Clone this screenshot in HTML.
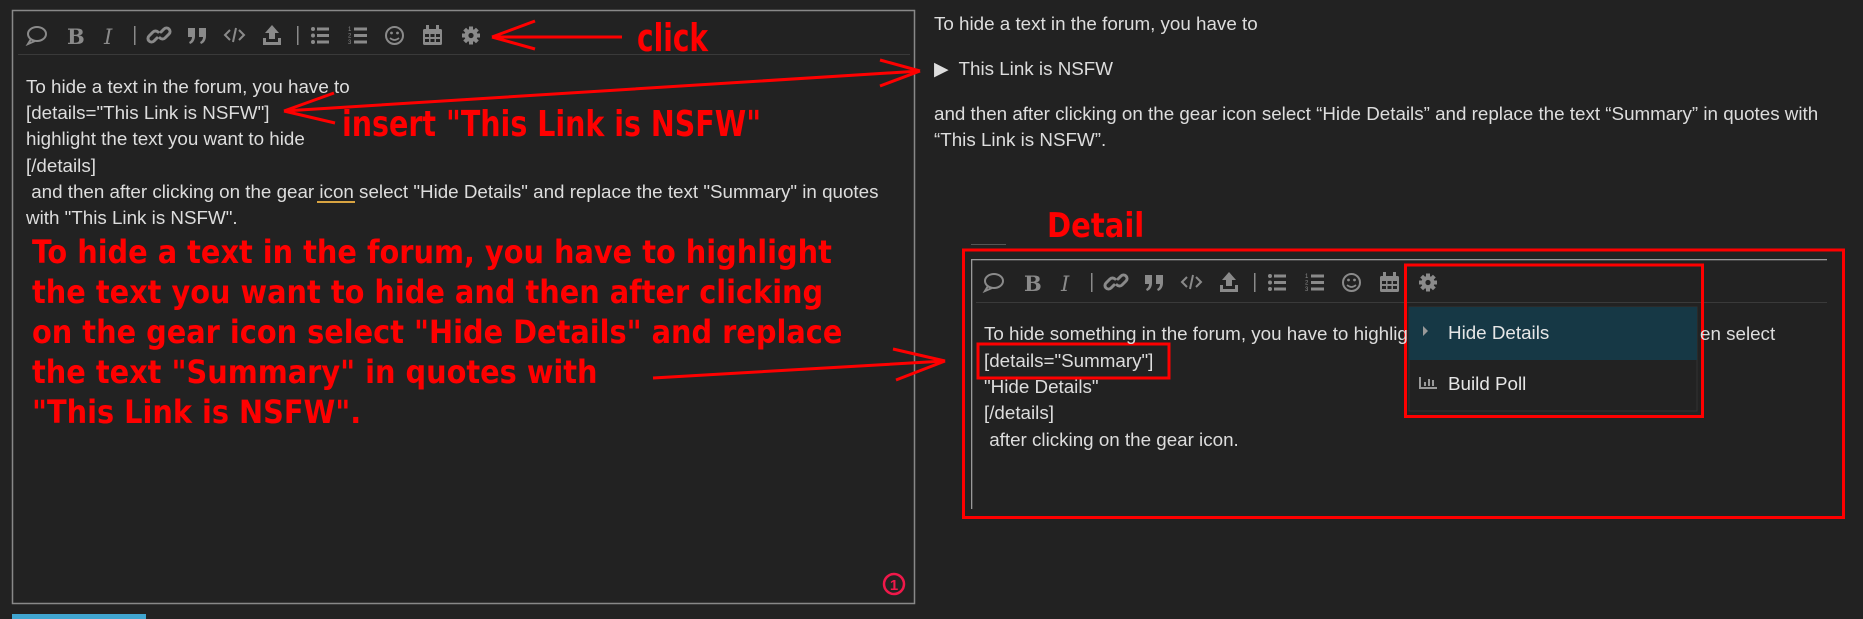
<!DOCTYPE html>
<html><head><meta charset="utf-8">
<style>
html,body{margin:0;padding:0;background:#222;width:1863px;height:619px;overflow:hidden;position:relative}
.t{position:absolute;font-family:"Liberation Sans",Arial,sans-serif;font-size:18.8px;color:#ddd;white-space:nowrap;line-height:26.4px}
.r{position:absolute;font-family:"DejaVu Sans Condensed","DejaVu Sans",sans-serif;font-weight:bold;color:#f00;white-space:nowrap;transform-origin:0 0}
svg{position:absolute;left:0;top:0}
</style></head><body>
<svg width="1863" height="619" viewBox="0 0 1863 619">
<defs>
<g id="tb" fill="#8a8a8a" stroke="none">
 <ellipse cx="37" cy="34" rx="9" ry="7" fill="none" stroke="#8a8a8a" stroke-width="2"/>
 <path d="M31 39 L28 44 L35 41" fill="none" stroke="#8a8a8a" stroke-width="2"/>
 <text x="67" y="44" font-family="DejaVu Serif,serif" font-weight="bold" font-size="21" fill="#8a8a8a">B</text>
 <text x="104" y="44" font-family="DejaVu Serif,serif" font-style="italic" font-size="21" fill="#8a8a8a">I</text>
 <rect x="134" y="26" width="1.5" height="19"/>
 <g fill="none" stroke="#8a8a8a" stroke-width="3" stroke-linecap="round">
  <path d="M157 38 l-3 3 a3.5 3.5 0 0 1 -5 -5 l4 -4 a3.5 3.5 0 0 1 5 0"/>
  <path d="M161 32 l3 -3 a3.5 3.5 0 0 1 5 5 l-4 4 a3.5 3.5 0 0 1 -5 0"/>
 </g>
 <path d="M188 28h7v8c0 4-2 7-5 8l-1-2c2-1 3-3 3-5h-4z M199 28h7v8c0 4-2 7-5 8l-1-2c2-1 3-3 3-5h-4z"/>
 <path d="M230 30l-5 5 5 5 M239 30l5 5-5 5 M236 28l-3 14" fill="none" stroke="#8a8a8a" stroke-width="2"/>
 <path d="M272 25l-7 8h4v6h6v-6h4z"/>
 <path d="M263 38h3v4h12v-4h3v7h-18z"/>
 <rect x="297" y="26" width="1.5" height="19"/>
 <circle cx="313" cy="29" r="2"/><circle cx="313" cy="35.5" r="2"/><circle cx="313" cy="42" r="2"/>
 <rect x="317" y="27.5" width="12" height="3"/><rect x="317" y="34" width="12" height="3"/><rect x="317" y="40.5" width="12" height="3"/>
 <text x="348" y="31" font-size="6" font-family="Liberation Sans">1</text><text x="348" y="37.5" font-size="6" font-family="Liberation Sans">2</text><text x="348" y="44" font-size="6" font-family="Liberation Sans">3</text>
 <rect x="354" y="27.5" width="13" height="3"/><rect x="354" y="34" width="13" height="3"/><rect x="354" y="40.5" width="13" height="3"/>
 <circle cx="394.5" cy="35.5" r="8.5" fill="none" stroke="#8a8a8a" stroke-width="2"/>
 <circle cx="391.5" cy="33" r="1.4"/><circle cx="397.5" cy="33" r="1.4"/>
 <path d="M390 38 q4.5 4 9 0" fill="none" stroke="#8a8a8a" stroke-width="1.6"/>
 <rect x="423" y="29" width="19" height="16" rx="1.5"/>
 <rect x="426" y="25" width="3" height="5"/><rect x="436" y="25" width="3" height="5"/>
 <g fill="#222"><rect x="425" y="34" width="4" height="3"/><rect x="430.5" y="34" width="4" height="3"/><rect x="436" y="34" width="4" height="3"/><rect x="425" y="39" width="4" height="3"/><rect x="430.5" y="39" width="4" height="3"/><rect x="436" y="39" width="4" height="3"/></g>
 <g transform="translate(471 35.5)">
  <circle r="6.5"/>
  <rect x="-2" y="-9" width="4" height="18"/>
  <rect x="-2" y="-9" width="4" height="18" transform="rotate(45)"/>
  <rect x="-2" y="-9" width="4" height="18" transform="rotate(90)"/>
  <rect x="-2" y="-9" width="4" height="18" transform="rotate(135)"/>
  <circle r="2.6" fill="#222"/>
 </g>
</g>
</defs>
<rect x="12.5" y="10.5" width="902" height="593" fill="none" stroke="#888" stroke-width="1.5"/>
<rect x="18" y="54" width="892" height="1" fill="#3a3a3a"/>
<use href="#tb"/>
<rect x="317" y="201" width="38" height="2" fill="#d9a441"/>
<circle cx="894" cy="584" r="10" fill="none" stroke="#f0184a" stroke-width="2.5"/>
<text x="894" y="590" text-anchor="middle" font-family="Liberation Sans" font-weight="bold" font-size="15" fill="#f0184a">1</text>
<rect x="12" y="614" width="134" height="5" fill="#40a5d0"/>
<rect x="971" y="244" width="35" height="1" fill="#555"/>
<rect x="971" y="259" width="856" height="1.3" fill="#999"/>
<rect x="971" y="259" width="1.3" height="250" fill="#999"/>
<rect x="976" y="302" width="851" height="1" fill="#3a3a3a"/>
<use href="#tb" transform="translate(957 247)"/>
<rect x="1409" y="307" width="288" height="104" fill="#222" stroke="#333" stroke-width="1"/>
<rect x="1409" y="307" width="288" height="53" fill="#163845"/>
<path d="M1423 326 l5 5 -5 5z" fill="#999"/>
<g fill="#999"><rect x="1419" y="387" width="18" height="2"/><rect x="1419" y="377" width="2" height="12"/><rect x="1424" y="382" width="2" height="4"/><rect x="1428" y="379" width="2" height="7"/><rect x="1432" y="380" width="2" height="6"/></g>
<g fill="none" stroke="#f00" stroke-width="3">
 <path d="M492 37 L622 37 M492 37 L535 21 M492 37 L535 49"/>
 <path d="M284 111 L920 71 M284 111 L334 93 M284 111 L335 123"/>
 <path d="M920 71 L880 60 M920 71 L880 86"/>
 <path d="M653 378 L945 361 L893 349 M945 361 L896 380"/>
 <rect x="963.5" y="250" width="880" height="267.5"/>
 <rect x="978" y="344" width="191" height="34"/>
 <rect x="1405.5" y="265" width="297" height="151.5"/>
</g>
</svg>

<div class="t" style="left:26px;top:74px">To hide a text in the forum, you have to</div>
<div class="t" style="left:26px;top:100px">[details="This Link is NSFW"]</div>
<div class="t" style="left:26px;top:126px">highlight the text you want to hide</div>
<div class="t" style="left:26px;top:153px">[/details]</div>
<div class="t" style="left:26px;top:179px">&nbsp;and then after clicking on the gear icon select "Hide Details" and replace the text "Summary" in quotes</div>
<div class="t" style="left:26px;top:205px">with "This Link is NSFW".</div>

<div class="r" style="left:637px;top:16px;font-size:38px;transform:scaleX(0.82)">click</div>
<div class="r" style="left:342px;top:104px;font-size:36px;transform:scaleX(0.88)">insert "This Link is NSFW"</div>
<div class="r" style="left:32px;top:232px;font-size:32px;line-height:40px;transform:scaleX(1.0)">To hide a text in the forum, you have to highlight<br>the text you want to hide and then after clicking<br>on the gear icon select "Hide Details" and replace<br>the text "Summary" in quotes with<br>"This Link is NSFW".</div>
<div class="r" style="left:1047px;top:206px;font-size:34px;transform:scaleX(0.95)">Detail</div>

<div class="t" style="left:934px;top:11px">To hide a text in the forum, you have to</div>
<div class="t" style="left:934px;top:56px">&#9654;&nbsp; This Link is NSFW</div>
<div class="t" style="left:934px;top:101px">and then after clicking on the gear icon select “Hide Details” and replace the text “Summary” in quotes with</div>
<div class="t" style="left:934px;top:127px">“This Link is NSFW”.</div>

<div class="t" style="left:984px;top:321px">To hide something in the forum, you have to highlig</div>
<div class="t" style="left:1700px;top:321px">en select</div>
<div class="t" style="left:984px;top:348px">[details="Summary"]</div>
<div class="t" style="left:984px;top:374px">"Hide Details"</div>
<div class="t" style="left:984px;top:400px">[/details]</div>
<div class="t" style="left:984px;top:427px">&nbsp;after clicking on the gear icon.</div>

<div class="t" style="left:1448px;top:320px;color:#e6e6e6">Hide Details</div>
<div class="t" style="left:1448px;top:371px;color:#e6e6e6">Build Poll</div>
</body></html>
